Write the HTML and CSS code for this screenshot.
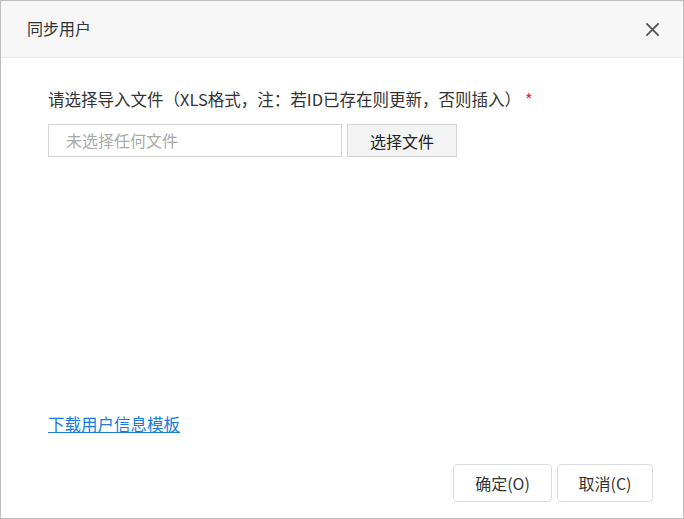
FILE: index.html
```html
<!DOCTYPE html>
<html lang="zh-CN">
    <head>
        <meta charset="UTF-8" />
        <title>同步用户</title>
        <link rel="stylesheet" href="styles.css">
    </head>
    <body>
        <div class="dialog">
            <div class="dialog-head">
                <span class="dialog-title">同步用户</span>
                <svg class="close" width="16" height="16" viewBox="0 0 16 16">
                    <path d="M1.5 1.5 L14.5 14.5 M14.5 1.5 L1.5 14.5" stroke="#555" stroke-width="2" fill="none" />
                </svg>
            </div>
            <div class="dialog-body">
                <div class="label">请选择导入文件（XLS格式，注：若ID已存在则更新，否则插入）<span class="req">*</span></div>
                <div class="file-row">
                    <div class="file-name">未选择任何文件</div>
                    <button class="file-btn">选择文件</button>
                </div>
                <div class="spacer"></div>
                <a class="tpl-link" href="#">下载用户信息模板</a>
            </div>
            <div class="dialog-foot">
                <button class="btn">确定(O)</button>
                <button class="btn">取消(C)</button>
            </div>
        </div>
    </body>
</html>
```

FILE: styles.css
```css
html,
body {
    margin: 0;
    padding: 0;
}
body {
    font-family: "Noto Sans CJK SC", "Liberation Sans", sans-serif;
    color: #333;
    background: #fff;
}
.dialog {
    width: 684px;
    height: 519px;
    box-sizing: border-box;
    border: 1px solid #bdbdbd;
    display: flex;
    flex-direction: column;
}
.dialog-head {
    height: 56px;
    background-color: #f7f7f7;
    border-bottom: 1px solid #ececec;
    display: flex;
    align-items: center;
    justify-content: space-between;
    padding: 0 23px 0 26px;
}
.dialog-title {
    font-size: 16px;
    color: #333;
    margin-top: -3px;
}
.close {
    width: 15px;
    height: 15px;
    margin-top: 1px;
}
.dialog-body {
    flex: 1;
    display: flex;
    flex-direction: column;
    padding: 30px 47px 0 47px;
}
.label {
    font-size: 16.5px;
    line-height: 22px;
    color: #333;
}
.req {
    color: #e22;
    margin-left: 4px;
}
.file-row {
    display: flex;
    margin-top: 14px;
}
.file-name {
    width: 294px;
    height: 33px;
    box-sizing: border-box;
    border: 1px solid #d5d5d5;
    padding: 0 17px;
    font-size: 16px;
    line-height: 31px;
    color: #aaa;
}
.file-btn {
    margin-left: 5px;
    width: 110px;
    height: 33px;
    border: 1px solid #d5d5d5;
    background-color: #f3f3f3;
    font-family: inherit;
    font-size: 16px;
    color: #222;
    padding: 0;
}
.spacer {
    flex: 1;
}
.tpl-link {
    align-self: flex-start;
    font-size: 16.5px;
    line-height: 22px;
    color: #1a7be0;
    text-decoration: underline;
    margin-bottom: 29px;
}
.dialog-foot {
    display: flex;
    justify-content: flex-end;
    gap: 5px;
    padding: 0 30px 16px 0;
}
.btn {
    width: 99px;
    height: 38px;
    border: 1px solid #dcdcdc;
    border-radius: 4px;
    background-color: #fff;
    font-family: inherit;
    font-size: 16px;
    color: #333;
    padding: 0;
}
.btn + .btn {
    width: 96px;
}
```
